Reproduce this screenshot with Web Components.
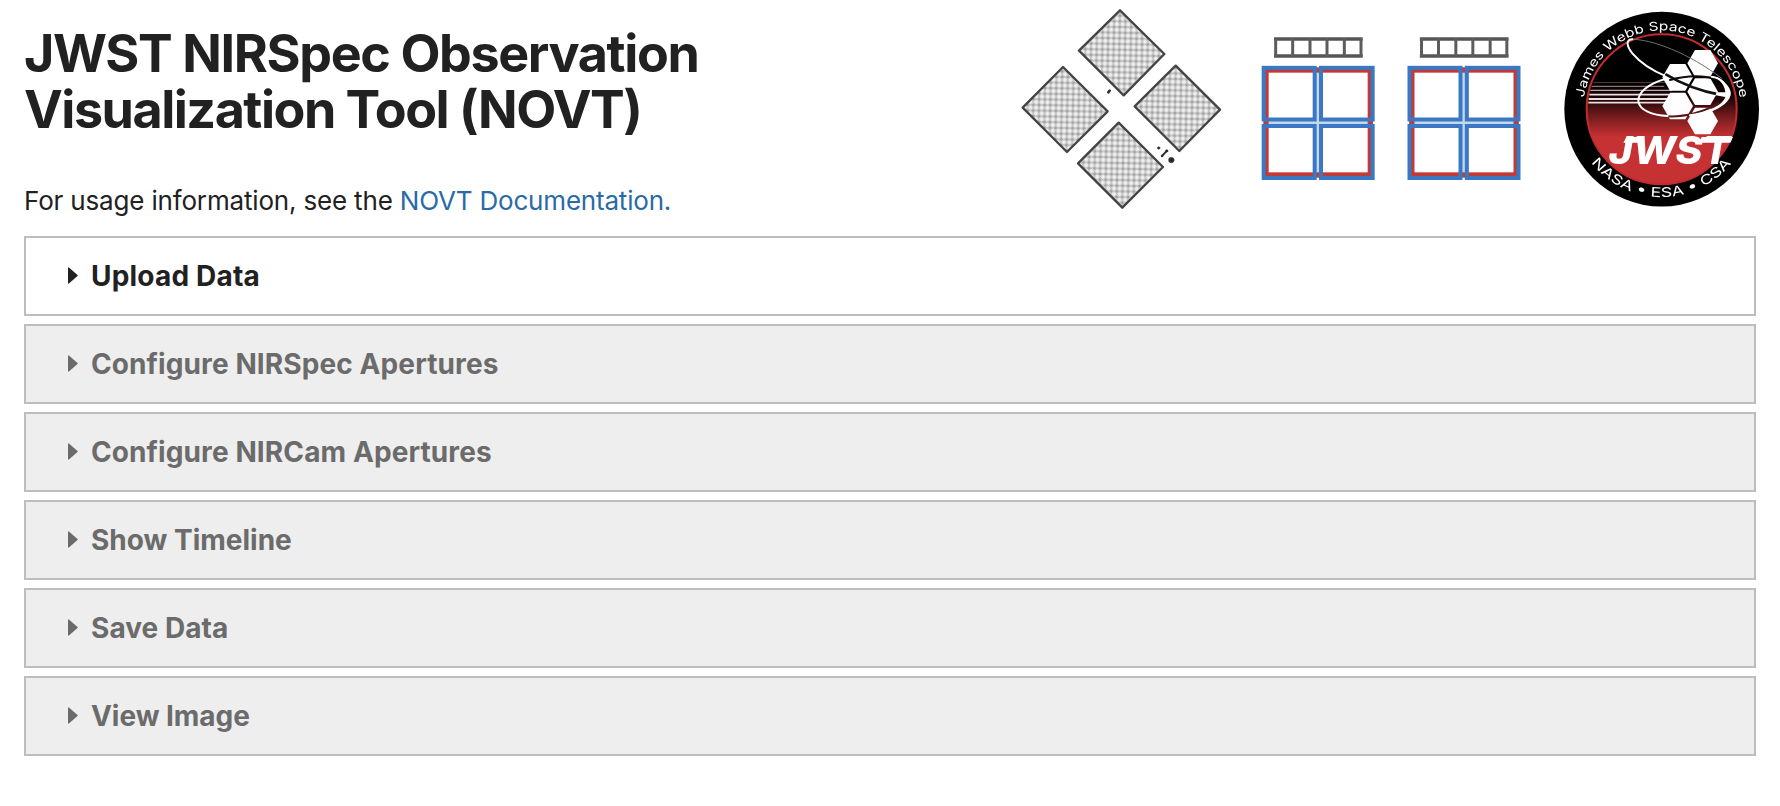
<!DOCTYPE html>
<html lang="en">
<head>
<meta charset="utf-8">
<title>JWST NIRSpec Observation Visualization Tool (NOVT)</title>
<style>
body{margin:0;background:#fff;color:#212121;font-family:Inter,"Liberation Sans",sans-serif}
</style>
</head>
<body>
<novt-app></novt-app>
<script>
const define = (name, html) => customElements.define(name, class extends HTMLElement {
  connectedCallback() {
    if (this.shadowRoot) return;
    const t = document.createElement('template');
    t.innerHTML = html;
    this.attachShadow({mode: 'open'}).append(t.content.cloneNode(true));
  }
});

/* NIRSpec micro-shutter quadrants */
define('nirspec-figure', `
<style>:host{display:block;width:220px;height:220px}svg{display:block;filter:blur(.35px)}</style>
<svg width="220" height="220" viewBox="0 0 660 660">
  <defs><pattern id="g" width="17" height="17" patternUnits="userSpaceOnUse" patternTransform="translate(330 30) rotate(1)">
    <rect width="17" height="17" fill="#c9c9c9"/><g fill="#a2a2a2"><circle cx="0" cy="0" r="4.500"/><circle cx="17" cy="0" r="4.500"/><circle cx="0" cy="17" r="4.500"/><circle cx="17" cy="17" r="4.500"/></g><circle cx="8.500" cy="8.500" r="5.500" fill="#f0f0f0"/></pattern></defs>
  <g fill="url(#g)" stroke="#444" stroke-width="7" stroke-linejoin="round">
    <path d="M330 31 463 162 341 286 207 152Z"/><path d="M159 201 293 334 171 456 38 323Z"/>
    <path d="M497 197 630 329 508 453 374 319Z"/><path d="M326 368 459 501 337 623 204 490Z"/>
  </g>
  <g fill="#2a2a2a" stroke="#333" stroke-linecap="round">
    <path d="M295 277l4-5" stroke-width="8"/><circle cx="446" cy="444" r="4"/>
    <path d="M456 468 471 452" stroke-width="6"/><circle cx="456" cy="468" r="3"/><circle cx="470" cy="453" r="4"/><circle cx="484" cy="480" r="8.500"/>
  </g>
</svg>`);

/* NIRCam module pair */
define('nircam-figure', `
<style>:host{display:block;width:290px;height:180px}svg{display:block;filter:blur(.35px)}</style>
<svg width="290" height="180" viewBox="0 0 870 540">
  <defs><g id="m" fill="none">
    <path d="M72 57H338M72 108H338" stroke="#555" stroke-width="10"/><path d="M77 55V110M128 55V110M180 55V110M231 55V110M283 55V110M333 55V110" stroke="#5c5c5c" stroke-width="9"/>
    <path d="M203.500 150V470M45 308H365" stroke="#c3d7ef" stroke-width="13"/>
    <rect x="48" y="150" width="313" height="315" stroke="#c23a35" stroke-width="16"/>
    <path d="M203.500 160V456M58 308H351" stroke="#c3d7ef" stroke-width="13"/>
    <g stroke="#3a78c4" stroke-width="12"><rect x="41" y="143.500" width="153" height="155"/><rect x="213" y="143.500" width="155" height="155"/><rect x="41" y="318" width="153" height="156"/><rect x="213" y="318" width="155" height="156"/></g>
  </g></defs>
  <use href="#m"/><use href="#m" x="437.500"/>
</svg>`);

/* Mission patch */
define('jwst-patch', `
<style>:host{display:block;width:225px;height:220px}svg{display:block;filter:blur(.25px)}
.ring{font:400 37px Inter,sans-serif;fill:#fff}.word{font:italic 800 114px Inter,sans-serif;fill:#fff}</style>
<svg width="225" height="220" viewBox="0 0 675 660">
  <defs>
    <linearGradient id="sky" gradientUnits="userSpaceOnUse" x1="0" x2="0" y1="235" y2="410"><stop offset="0" stop-color="#000"/><stop offset=".35" stop-color="#1e0506"/><stop offset=".62" stop-color="#6d191b"/><stop offset="1" stop-color="#c63133"/></linearGradient>
    <path id="top" d="M87 293A236 236 0 0 1 554 293"/>
    <path id="bot" d="M109 487A266 266 0 0 0 531 487"/>
    <path id="hex" d="M-46 0-23-40H23L46 0 23 40H-23Z"/>
  </defs>
  <circle cx="320" cy="327.500" r="292" fill="#000"/>
  <circle cx="320" cy="328" r="225" fill="url(#sky)" stroke="#c42c30" stroke-width="6"/>
  <g stroke="#eadfe0"><path d="M115 247H330" stroke-width="2" opacity=".5"/><path d="M110 259H328" stroke-width="3" opacity=".65"/><path d="M106 271H352" stroke-width="4" opacity=".75"/><path d="M103 284H342" stroke-width="5"/><path d="M101 297H336" stroke-width="6"/><path d="M100 308H334" stroke-width="5"/></g>
  <g fill="#fff"><use href="#hex" x="443" y="190"/><use href="#hex" x="368" y="232"/><use href="#hex" x="443" y="275"/><use href="#hex" x="368" y="318"/><use href="#hex" x="443" y="363"/></g>
  <g fill="none" stroke-linecap="round">
    <path d="M232 118C290 118 400 158 500 235" stroke="#707070" stroke-width="3"/>
    <path d="M232 118C212 118 214 138 232 160C255 187 292 212 334 229" stroke="#fff" stroke-width="6"/>
    <path d="M334 224C380 252 430 272 494 284" stroke="#111" stroke-width="8"/>
    <path d="M345 240C400 225 455 227 494 242" stroke="#140809" stroke-width="6"/>
    <path d="M338 349C390 352 450 334 490 311" stroke="#54161a" stroke-width="6"/>
    <path d="M334 236C280 250 248 278 250 304C254 330 290 346 338 348" stroke="#fff" stroke-width="6"/>
    <path d="M405 346C455 340 510 318 520 288" stroke="#fff" stroke-width="6"/>
    <path d="M470 230C500 234 515 255 520 278" stroke="#fff" stroke-width="6"/>
  </g>
  <path d="M482 230C515 246 531 268 527 286C520 312 485 330 455 340C488 320 507 305 511 291L482 286 484 277 511 277C510 259 500 246 482 230Z" fill="#fff"/>
  <text class="word" x="161" y="493" textLength="364" lengthAdjust="spacingAndGlyphs">JWST</text>
  <path d="M214 411H262L254 428H205ZM440 411H534L526 428H434Z" fill="#fff"/>
  <text class="ring"><textPath href="#top" textLength="674" lengthAdjust="spacingAndGlyphs">James Webb Space Telescope</textPath></text>
  <text class="ring" style="font-size:40px"><textPath href="#bot" textLength="484" lengthAdjust="spacingAndGlyphs">NASA • ESA • CSA</textPath></text>
</svg>`);

define('novt-header', `
<style>
:host{display:flex;height:236px;justify-content:space-between;padding-left:24px;box-sizing:border-box}
.copy{padding-top:26px;white-space:nowrap}
h1{margin:0;font-size:52px;line-height:56px;font-weight:700;letter-spacing:-1.37px}
h1 span{display:block}h1 span+span{letter-spacing:-1.49px}
p{margin:47px 0 0;font-size:26px;line-height:32px;letter-spacing:-.17px}
a{color:#296ba6;text-decoration:none;letter-spacing:-.19px}
.art{display:flex;align-items:flex-start;gap:20px}
nircam-figure{margin-top:20px}jwst-patch{margin-left:-5px}
</style>
<div class="copy"><h1><span>JWST NIRSpec Observation</span><span>Visualization Tool (NOVT)</span></h1>
<p>For usage information, see the <a href="#">NOVT Documentation.</a></p></div>
<div class="art"><nirspec-figure></nirspec-figure><nircam-figure></nircam-figure><jwst-patch></jwst-patch></div>`);

define('novt-panel', `
<style>
:host{display:flex;align-items:center;box-sizing:border-box;height:80px;border:2px solid #bdbdbd;padding-left:42px;background:#fff;color:#212121}
:host([disabled]){background:#eee;color:#6b6b6b}
svg{display:block;width:10px;height:17px;margin:0 13px 1px 0;flex:none}
h3{margin:0;font-size:28px;line-height:36px;font-weight:700;letter-spacing:var(--track,0)}
</style>
<svg viewBox="0 0 10 17"><path d="M0 .8Q.2 0 1.200.7L9.500 7.900Q10 8.500 9.500 9.100L1.200 16.300Q.2 17 0 16.200Z" fill="currentColor"/></svg>
<h3><slot></slot></h3>`);

define('novt-app', `
<style>
:host{display:block}
main{display:flex;flex-direction:column;gap:8px;padding:0 24px}
</style>
<novt-header></novt-header>
<main>
<novt-panel style="--track:.2px">Upload Data</novt-panel>
<novt-panel disabled style="--track:.1px">Configure NIRSpec Apertures</novt-panel>
<novt-panel disabled style="--track:.1px">Configure NIRCam Apertures</novt-panel>
<novt-panel disabled>Show Timeline</novt-panel>
<novt-panel disabled style="--track:.05px">Save Data</novt-panel>
<novt-panel disabled style="--track:-.05px">View Image</novt-panel>
</main>`);
</script>
</body>
</html>
